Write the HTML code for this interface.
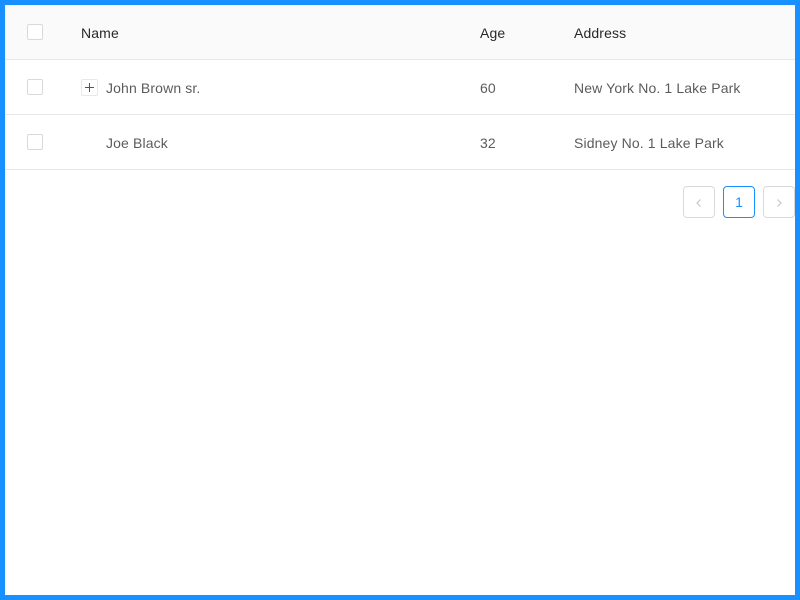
<!DOCTYPE html>
<html><head><style>
*{box-sizing:border-box;margin:0;padding:0}
body{width:800px;height:600px;overflow:hidden;background:#fff;font-family:"Liberation Sans",sans-serif;font-size:14px;color:rgba(0,0,0,.65)}
.frame{position:absolute;left:0;top:0;width:800px;height:600px;border:5px solid #1890ff}
.row{position:absolute;left:5px;width:790px;height:55px;border-bottom:1px solid #e8e8e8}
.hd{top:5px;background:#fafafa;color:rgba(0,0,0,.85)}
.cb{position:absolute;left:22px;top:19px;width:16px;height:16px;border:1px solid #d9d9d9;border-radius:2px;background:#fff}
.t{position:absolute;top:1px;line-height:54px;white-space:nowrap;letter-spacing:0.13px}
.exp{position:absolute;left:76px;top:19px;width:17px;height:17px;border:1px solid #e8e8e8;border-radius:2px;background:#fff}
.exp:before{content:"";position:absolute;left:3px;top:7px;width:9px;height:1px;background:#555}
.exp:after{content:"";position:absolute;left:7px;top:3px;width:1px;height:9px;background:#555}
.pg{position:absolute;top:186px;width:32px;height:32px;border:1px solid #d9d9d9;border-radius:4px;text-align:center;line-height:30px}
</style></head><body>
<div class="row hd"><div class="cb"></div><div class="t" style="left:76px">Name</div><div class="t" style="left:475px">Age</div><div class="t" style="left:569px">Address</div></div>
<div class="row" style="top:60px"><div class="cb"></div><div class="exp"></div><div class="t" style="left:101px">John Brown sr.</div><div class="t" style="left:475px">60</div><div class="t" style="left:569px">New York No. 1 Lake Park</div></div>
<div class="row" style="top:115px"><div class="cb"></div><div class="t" style="left:101px">Joe Black</div><div class="t" style="left:475px">32</div><div class="t" style="left:569px">Sidney No. 1 Lake Park</div></div>
<div class="pg" style="left:683px"><svg width="10" height="10" viewBox="0 0 10 10" style="margin-top:11px"><path d="M6.5 1.5L3 5l3.5 3.5" fill="none" stroke="#c8c8c8" stroke-width="1.2"/></svg></div>
<div class="pg" style="left:723px;border-color:#1890ff;color:#1890ff">1</div>
<div class="pg" style="left:763px"><svg width="10" height="10" viewBox="0 0 10 10" style="margin-top:11px"><path d="M3.5 1.5L7 5 3.5 8.5" fill="none" stroke="#c8c8c8" stroke-width="1.2"/></svg></div>
<div class="frame"></div>
</body></html>
